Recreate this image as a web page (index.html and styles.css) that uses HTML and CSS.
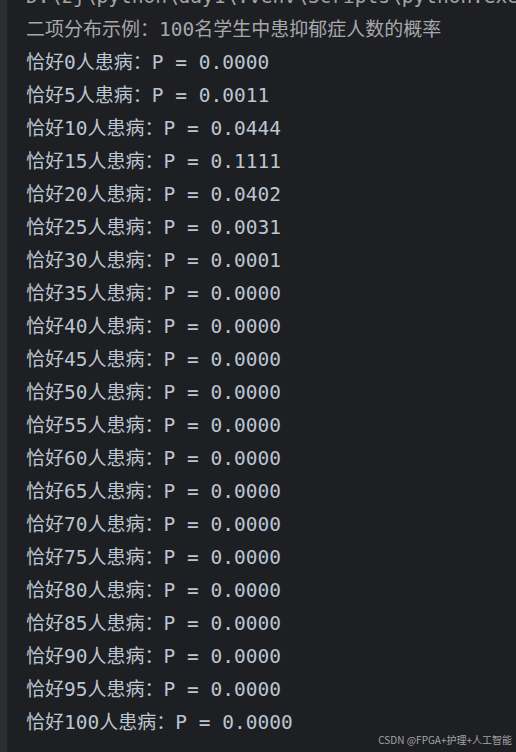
FILE: index.html
```html
<!DOCTYPE html>
<html lang="zh">
<head>
<meta charset="utf-8">
<title>Console</title>
<link rel="stylesheet" href="styles.css">
</head>
<body>
<div class="ide">
  <div class="gutter"></div>
  <div class="console">
    <div class="line cmd">D:\zj\python\day1\.venv\Scripts\python.exe D:\zj\python\day1\binom.py</div>
    <div class="line title"><span class="cn">二项分布示例：</span>100<span class="cn">名学生中患抑郁症人数的概率</span></div>
    <div class="line out"><span class="cn">恰好</span>0<span class="cn">人患病：</span>P = 0.0000</div>
    <div class="line out"><span class="cn">恰好</span>5<span class="cn">人患病：</span>P = 0.0011</div>
    <div class="line out"><span class="cn">恰好</span>10<span class="cn">人患病：</span>P = 0.0444</div>
    <div class="line out"><span class="cn">恰好</span>15<span class="cn">人患病：</span>P = 0.1111</div>
    <div class="line out"><span class="cn">恰好</span>20<span class="cn">人患病：</span>P = 0.0402</div>
    <div class="line out"><span class="cn">恰好</span>25<span class="cn">人患病：</span>P = 0.0031</div>
    <div class="line out"><span class="cn">恰好</span>30<span class="cn">人患病：</span>P = 0.0001</div>
    <div class="line out"><span class="cn">恰好</span>35<span class="cn">人患病：</span>P = 0.0000</div>
    <div class="line out"><span class="cn">恰好</span>40<span class="cn">人患病：</span>P = 0.0000</div>
    <div class="line out"><span class="cn">恰好</span>45<span class="cn">人患病：</span>P = 0.0000</div>
    <div class="line out"><span class="cn">恰好</span>50<span class="cn">人患病：</span>P = 0.0000</div>
    <div class="line out"><span class="cn">恰好</span>55<span class="cn">人患病：</span>P = 0.0000</div>
    <div class="line out"><span class="cn">恰好</span>60<span class="cn">人患病：</span>P = 0.0000</div>
    <div class="line out"><span class="cn">恰好</span>65<span class="cn">人患病：</span>P = 0.0000</div>
    <div class="line out"><span class="cn">恰好</span>70<span class="cn">人患病：</span>P = 0.0000</div>
    <div class="line out"><span class="cn">恰好</span>75<span class="cn">人患病：</span>P = 0.0000</div>
    <div class="line out"><span class="cn">恰好</span>80<span class="cn">人患病：</span>P = 0.0000</div>
    <div class="line out"><span class="cn">恰好</span>85<span class="cn">人患病：</span>P = 0.0000</div>
    <div class="line out"><span class="cn">恰好</span>90<span class="cn">人患病：</span>P = 0.0000</div>
    <div class="line out"><span class="cn">恰好</span>95<span class="cn">人患病：</span>P = 0.0000</div>
    <div class="line out"><span class="cn">恰好</span>100<span class="cn">人患病：</span>P = 0.0000</div>
  </div>
</div>
<div class="watermark">CSDN @FPGA+护理+人工智能</div>
</body>
</html>
```

FILE: styles.css
```css
html, body {
  margin: 0;
  padding: 0;
  width: 516px;
  height: 752px;
  overflow: hidden;
  background: #1e1f22;
}

.ide {
  display: flex;
  height: 752px;
}

.gutter {
  width: 7px;
  flex: none;
  background: #2b2d30;
}

.console {
  flex: 1;
  padding-left: 19px;
  margin-top: -20px;
  font-family: "DejaVu Sans Mono", "Noto Sans CJK SC", monospace;
  font-size: 19.5px;
  line-height: 33px;
  white-space: nowrap;
  overflow: hidden;
}

.line {
  height: 33px;
}

.cn {
  font-family: "Noto Sans CJK SC", sans-serif;
  font-size: 19px;
  line-height: 1;
}

.line.cmd {
  color: #a2a4a8;
}

.line.title {
  color: #a6a8ad;
}

.line.out {
  color: #bcc5d2;
}

.watermark {
  position: absolute;
  right: 4px;
  bottom: 6px;
  font-family: "Noto Sans CJK SC", "Liberation Sans", sans-serif;
  font-size: 10px;
  line-height: 12px;
  color: #a3a4a6;
}
```
